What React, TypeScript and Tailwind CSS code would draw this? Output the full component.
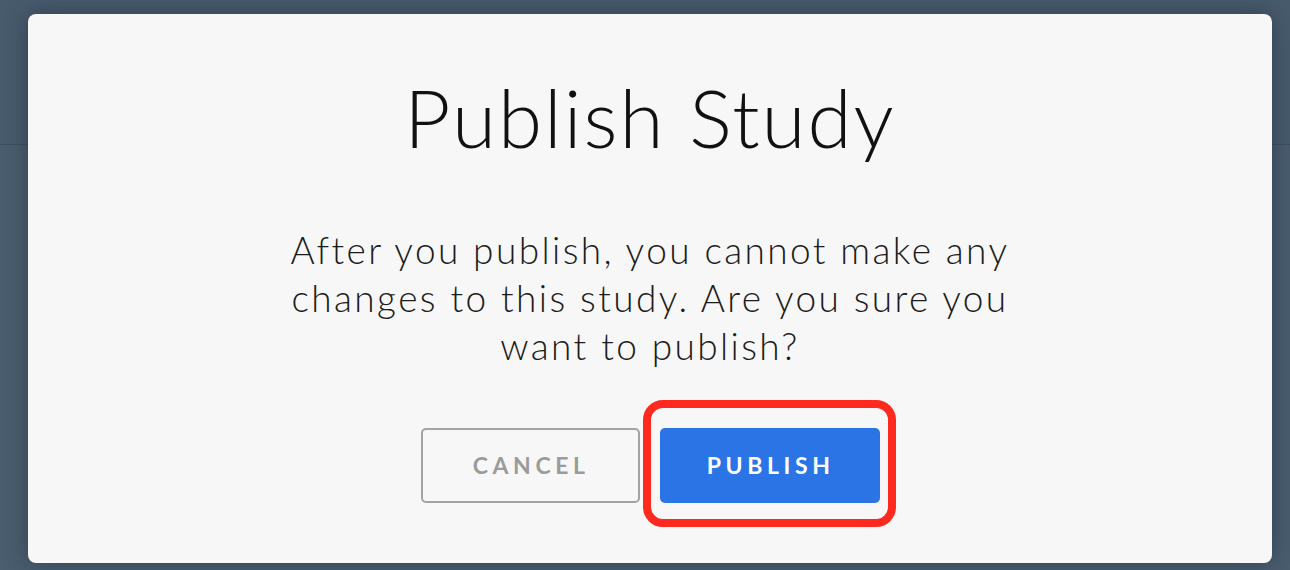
import React from 'react'

export default function App() {
  return (
    <div className="relative h-[570px] w-[1290px] overflow-hidden bg-[#4a5d6f] font-['Lato','Liberation_Sans',sans-serif]">
      {/* page behind the overlay */}
      <div className="h-[145px] border-b border-[#3f5061] bg-[#485b6d]" />
      <div className="h-[425px] bg-[#4a5d6f]" />

      {/* modal */}
      <div className="absolute left-[28px] top-[14px] flex h-[549px] w-[1244px] flex-col items-center rounded-[8px] bg-[#f7f7f7] pt-[55px] shadow-[0_0_24px_rgba(20,30,40,0.45)]">
        <h1 className="text-[80px] font-light leading-[96px] tracking-[0.025em] text-[#111]">Publish Study</h1>

        <p className="mt-[61px] w-[760px] text-center text-[37px] font-light leading-[48px] tracking-[0.065em] text-[#1c1c1c]">
          After you publish, you cannot make any changes to this study. Are you sure you want to publish?
        </p>

        <div className="mt-[58px] flex gap-[20px]">
          <button
            type="button"
            className="flex h-[75px] w-[219px] items-center justify-center rounded-[5px] border-2 border-[#a3a3a3] bg-transparent pl-[0.1em] text-[23px] font-bold tracking-[0.2em] text-[#9b9b9b]"
          >
            CANCEL
          </button>
          <div className="relative">
            <button
              type="button"
              className="flex h-[75px] w-[220px] items-center justify-center rounded-[5px] bg-[#2b74e6] pl-[0.1em] text-[23px] font-bold tracking-[0.2em] text-white"
            >
              PUBLISH
            </button>
            {/* highlight annotation */}
            <div className="pointer-events-none absolute -bottom-[24px] -left-[17px] -right-[16px] -top-[28px] rounded-[20px] border-[8px] border-[#ff2a1f]" />
          </div>
        </div>
      </div>
    </div>
  )
}
